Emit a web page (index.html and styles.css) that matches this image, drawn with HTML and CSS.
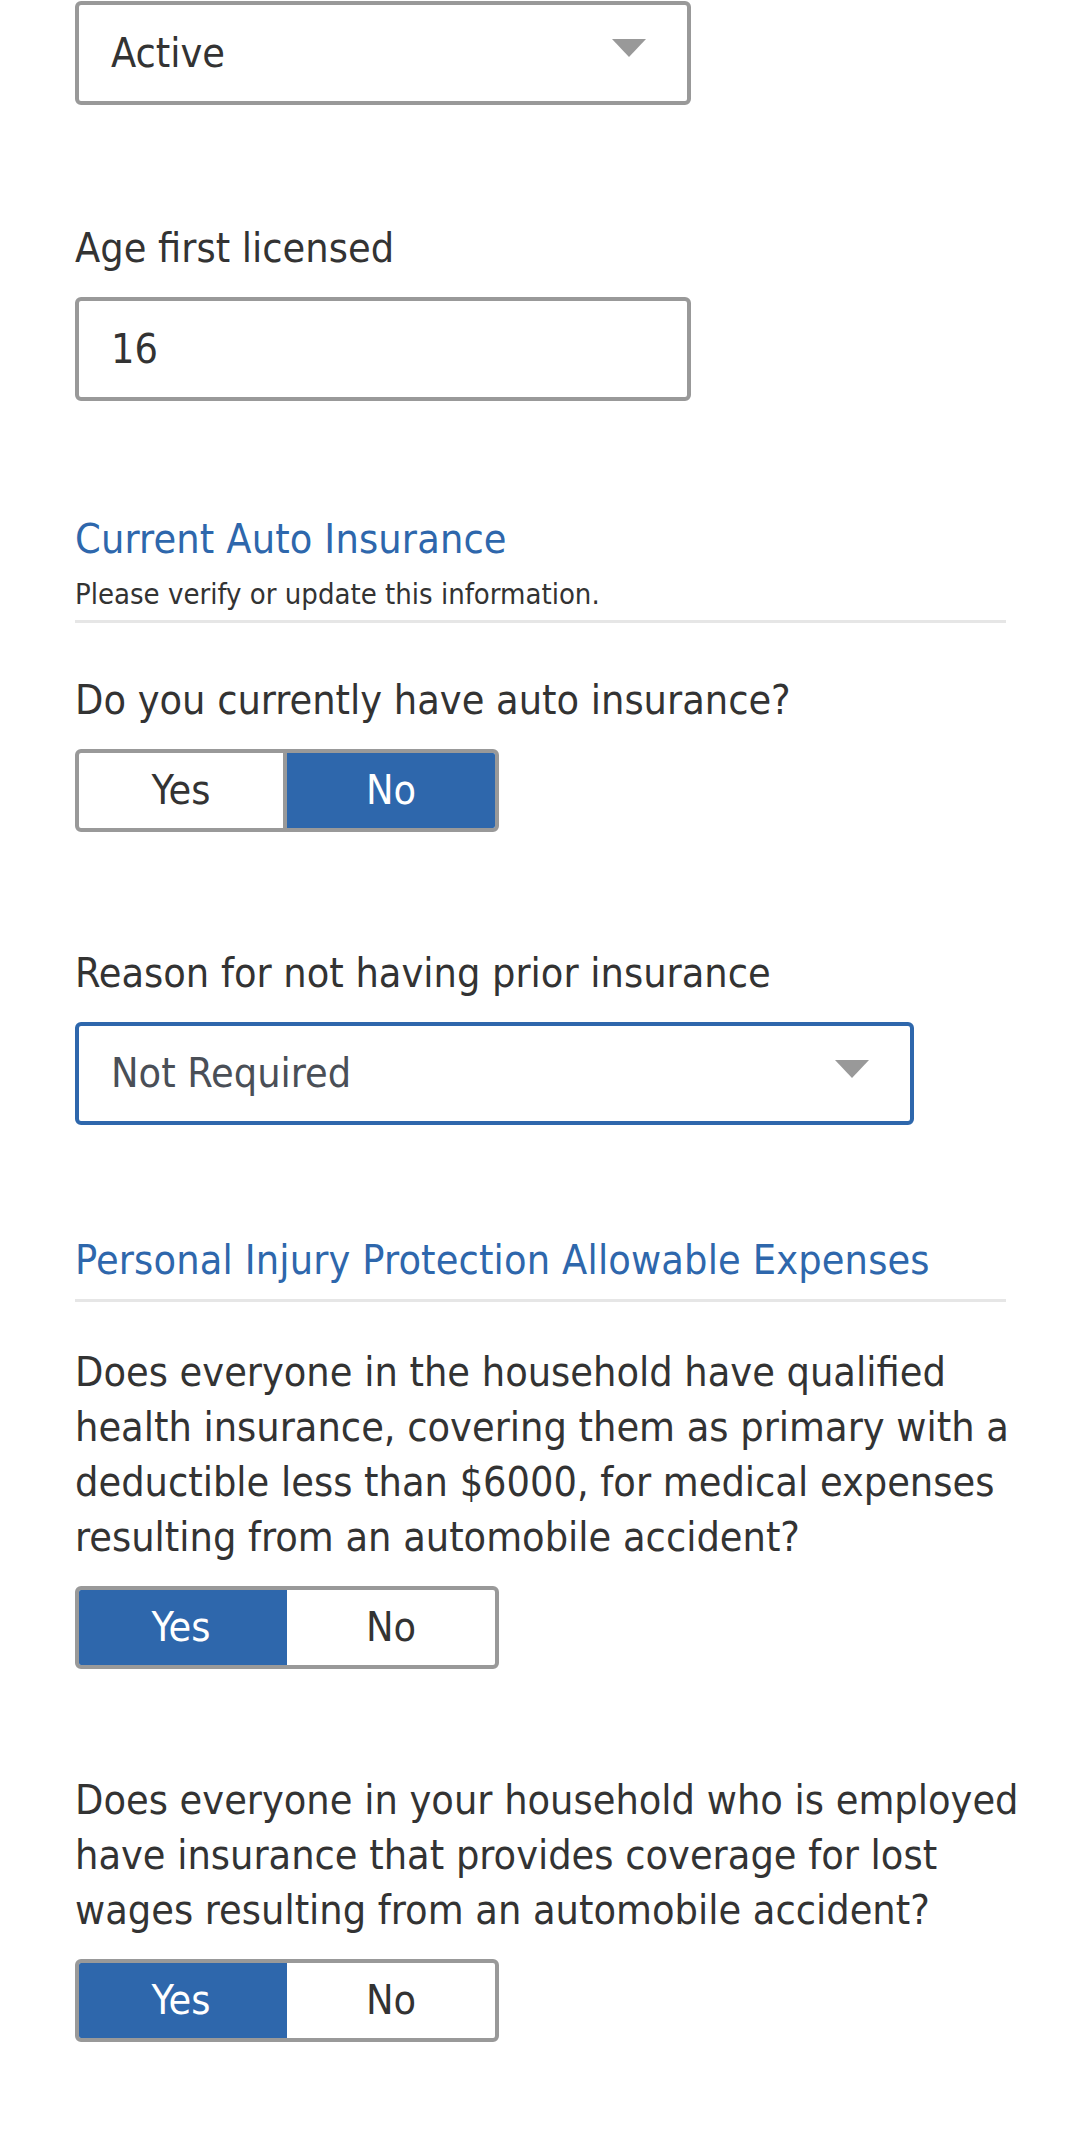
FILE: index.html
```html
<!DOCTYPE html>
<html lang="en">
<head>
<meta charset="utf-8">
<title>Driver details</title>
<link rel="stylesheet" href="styles.css">
</head>
<body>
<main class="form">
  <div class="select">
    <span class="select-value">Active</span>
    <span class="caret"></span>
  </div>

  <div class="field field-age">
    <p class="label">Age first licensed</p>
    <div class="input">16</div>
  </div>

  <section class="section section-current">
    <h2 class="section-title">Current Auto Insurance</h2>
    <p class="section-sub">Please verify or update this information.</p>
  </section>

  <div class="field field-after-section">
    <p class="label">Do you currently have auto insurance?</p>
    <div class="toggle">
      <span class="opt">Yes</span>
      <span class="opt selected">No</span>
    </div>
  </div>

  <div class="field field-reason">
    <p class="label">Reason for not having prior insurance</p>
    <div class="select select-wide select-focus">
      <span class="select-value">Not Required</span>
      <span class="caret"></span>
    </div>
  </div>

  <section class="section section-pip">
    <h2 class="section-title">Personal Injury Protection Allowable Expenses</h2>
  </section>

  <div class="field field-after-pip">
    <p class="label">Does everyone in the household have qualified health insurance, covering them as primary with a deductible less than $6000, for medical expenses resulting from an automobile accident?</p>
    <div class="toggle">
      <span class="opt selected">Yes</span>
      <span class="opt">No</span>
    </div>
  </div>

  <div class="field field-wages">
    <p class="label">Does everyone in your household who is employed have insurance that provides coverage for lost wages resulting from an automobile accident?</p>
    <div class="toggle">
      <span class="opt selected">Yes</span>
      <span class="opt">No</span>
    </div>
  </div>
</main>
</body>
</html>
```

FILE: styles.css
```css
html, body {
  margin: 0;
  padding: 0;
  background: #ffffff;
}

body {
  font-family: "DejaVu Sans Condensed", "DejaVu Sans", sans-serif;
  font-stretch: condensed;
  color: #333333;
}

.form {
  width: 931px;
  padding: 1px 74px 40px 75px;
}

/* select / input boxes */
.select,
.input {
  box-sizing: border-box;
  display: flex;
  align-items: center;
  width: 616px;
  height: 104px;
  border: 4px solid #999999;
  border-radius: 6px;
  padding: 0 41px 0 32px;
  font-size: 41px;
  line-height: 55px;
  color: #333333;
  background: #ffffff;
}

.select-wide {
  width: 839px;
  height: 103px;
}

.select-focus {
  border-color: #2e67ac;
  color: #4a4f57;
}

.caret {
  margin-left: auto;
  margin-bottom: 10px;
  width: 0;
  height: 0;
  border-left: 17px solid transparent;
  border-right: 17px solid transparent;
  border-top: 18px solid #999999;
}

/* labels */
.label {
  margin: 0 -40px 21px 0;
  font-size: 41px;
  line-height: 55px;
}

.field-age { margin-top: 116px; }
.field-after-section { margin-top: 50px; }
.field-reason { margin-top: 114px; }
.field-after-pip { margin-top: 43px; }
.field-wages { margin-top: 104px; }

/* section headings */
.section {
  border-bottom: 3px solid #e6e6e6;
}

.section-current {
  margin-top: 111px;
  padding-bottom: 8px;
}

.section-pip {
  margin-top: 108px;
  padding-bottom: 11px;
}

.section-title {
  margin: 0;
  font-size: 41px;
  line-height: 55px;
  letter-spacing: 0.15px;
  font-weight: normal;
  color: #2e67ac;
}

.section-sub {
  margin: 9px 0 0;
  font-size: 29px;
  line-height: 36px;
  color: #333333;
}

/* yes / no toggle */
.toggle {
  box-sizing: border-box;
  display: flex;
  width: 424px;
  height: 83px;
  border: 4px solid #999999;
  border-radius: 6px;
  overflow: hidden;
  background: #ffffff;
}

.opt {
  box-sizing: border-box;
  flex: 0 0 208px;
  display: flex;
  align-items: center;
  justify-content: center;
  font-size: 41px;
  line-height: 55px;
  color: #333333;
}

.opt:first-child {
  border-right: 4px solid #999999;
}

.opt.selected {
  background: #2e67ac;
  color: #ffffff;
}

.opt.selected:first-child {
  border-right-color: #2e67ac;
}
```
